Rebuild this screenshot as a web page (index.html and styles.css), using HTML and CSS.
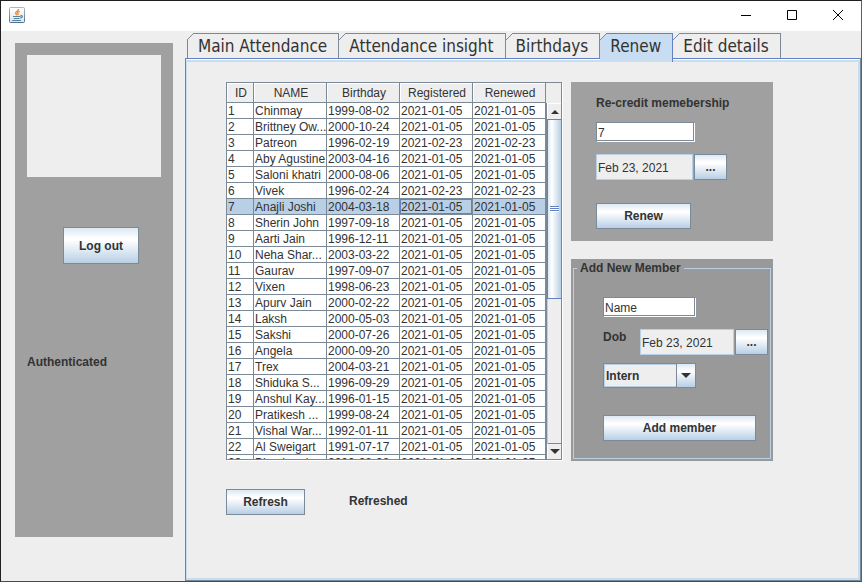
FILE: index.html
```html
<!DOCTYPE html>
<html lang="en">
<head>
<meta charset="utf-8">
<title>Attendance</title>
<link rel="stylesheet" href="styles.css">
</head>
<body>
<div class="window">
  <header class="titlebar">
    <svg class="logo" width="16" height="16" viewBox="0 0 16 16" aria-hidden="true">
      <defs>
        <linearGradient id="frame" x1="0" y1="0" x2="0" y2="1"><stop offset="0" stop-color="#a9b8c6"/><stop offset="1" stop-color="#4f6f8b"/></linearGradient>
        <linearGradient id="face" x1="0" y1="0" x2="0" y2="1"><stop offset="0" stop-color="#fff"/><stop offset="1" stop-color="#dfe4e8"/></linearGradient>
      </defs>
      <rect x=".5" y=".5" width="15" height="15" rx="1" fill="url(#face)" stroke="url(#frame)"/>
      <path d="M9.6 2.2C10 4 6.500 4.300 6.600 6C6.600 7 7.500 7.500 8 8.200M10.700 4.300C8.500 5 8.200 5.800 9 6.700C9.300 7.200 9 7.600 8.600 8" fill="none" stroke="#e8862e" stroke-width="1.300"/>
      <path d="M4 9.500H11.500M4.800 11.500H10.600M3.200 13.500H12M11.400 8.700C14 8.300 14 10.600 11.300 11.100" fill="none" stroke="#5382a1" stroke-width="1.200"/>
    </svg>
    <div class="window-controls">
      <button type="button" aria-label="Minimize"><svg width="10" height="10" viewBox="0 0 10 10"><path d="M0 5.500H10"/></svg></button>
      <button type="button" aria-label="Maximize"><svg width="10" height="10" viewBox="0 0 10 10"><path d="M.5.5H9.500V9.500H.5Z"/></svg></button>
      <button type="button" aria-label="Close"><svg width="10" height="10" viewBox="0 0 10 10"><path d="M0 0L10 10M10 0L0 10"/></svg></button>
    </div>
  </header>
  <div class="content">
    <aside class="sidebar">
      <div class="photo"></div>
      <button type="button" class="btn logout">Log out</button>
      <p class="auth">Authenticated</p>
    </aside>
    <main class="tabs-pane">
      <div class="tabs" role="tablist">
        <button type="button" role="tab" class="tab first">Main Attendance</button>
        <button type="button" role="tab" class="tab">Attendance insight</button>
        <button type="button" role="tab" class="tab">Birthdays</button>
        <button type="button" role="tab" class="tab active" aria-selected="true">Renew</button>
        <button type="button" role="tab" class="tab">Edit details</button>
      </div>
      <div class="panel">
        <section class="members">
          <div class="scroll-pane">
            <div class="table-view">
              <table>
                <colgroup><col class="col-id"><col><col><col><col></colgroup>
                <thead><tr><th>ID</th><th>NAME</th><th>Birthday</th><th>Registered</th><th>Renewed</th></tr></thead>
                <tbody>
                  <tr><td>1</td><td>Chinmay</td><td>1999-08-02</td><td>2021-01-05</td><td>2021-01-05</td></tr>
                  <tr><td>2</td><td>Brittney Ow...</td><td>2000-10-24</td><td>2021-01-05</td><td>2021-01-05</td></tr>
                  <tr><td>3</td><td>Patreon</td><td>1996-02-19</td><td>2021-02-23</td><td>2021-02-23</td></tr>
                  <tr><td>4</td><td>Aby Agustine</td><td>2003-04-16</td><td>2021-01-05</td><td>2021-01-05</td></tr>
                  <tr><td>5</td><td>Saloni khatri</td><td>2000-08-06</td><td>2021-01-05</td><td>2021-01-05</td></tr>
                  <tr><td>6</td><td>Vivek</td><td>1996-02-24</td><td>2021-02-23</td><td>2021-02-23</td></tr>
                  <tr class="selected"><td>7</td><td>Anajli Joshi</td><td>2004-03-18</td><td class="focused">2021-01-05</td><td>2021-01-05</td></tr>
                  <tr><td>8</td><td>Sherin John</td><td>1997-09-18</td><td>2021-01-05</td><td>2021-01-05</td></tr>
                  <tr><td>9</td><td>Aarti Jain</td><td>1996-12-11</td><td>2021-01-05</td><td>2021-01-05</td></tr>
                  <tr><td>10</td><td>Neha Shar...</td><td>2003-03-22</td><td>2021-01-05</td><td>2021-01-05</td></tr>
                  <tr><td>11</td><td>Gaurav</td><td>1997-09-07</td><td>2021-01-05</td><td>2021-01-05</td></tr>
                  <tr><td>12</td><td>Vixen</td><td>1998-06-23</td><td>2021-01-05</td><td>2021-01-05</td></tr>
                  <tr><td>13</td><td>Apurv Jain</td><td>2000-02-22</td><td>2021-01-05</td><td>2021-01-05</td></tr>
                  <tr><td>14</td><td>Laksh</td><td>2000-05-03</td><td>2021-01-05</td><td>2021-01-05</td></tr>
                  <tr><td>15</td><td>Sakshi</td><td>2000-07-26</td><td>2021-01-05</td><td>2021-01-05</td></tr>
                  <tr><td>16</td><td>Angela</td><td>2000-09-20</td><td>2021-01-05</td><td>2021-01-05</td></tr>
                  <tr><td>17</td><td>Trex</td><td>2004-03-21</td><td>2021-01-05</td><td>2021-01-05</td></tr>
                  <tr><td>18</td><td>Shiduka S...</td><td>1996-09-29</td><td>2021-01-05</td><td>2021-01-05</td></tr>
                  <tr><td>19</td><td>Anshul Kay...</td><td>1996-01-15</td><td>2021-01-05</td><td>2021-01-05</td></tr>
                  <tr><td>20</td><td>Pratikesh ...</td><td>1999-08-24</td><td>2021-01-05</td><td>2021-01-05</td></tr>
                  <tr><td>21</td><td>Vishal War...</td><td>1992-01-11</td><td>2021-01-05</td><td>2021-01-05</td></tr>
                  <tr><td>22</td><td>Al Sweigart</td><td>1991-07-17</td><td>2021-01-05</td><td>2021-01-05</td></tr>
                  <tr><td>23</td><td>Bhushan k...</td><td>2000-08-08</td><td>2021-01-05</td><td>2021-01-05</td></tr>
                </tbody>
              </table>
            </div>
            <div class="scroll-side">
              <div class="scroll-corner"></div>
              <div class="scrollbar">
                <button type="button" class="arrow" aria-label="Scroll up"><svg width="8" height="4" viewBox="0 0 8 4"><path d="M0 4L4 0L8 4Z"/></svg></button>
                <div class="track"><div class="thumb"><span class="grip"></span></div></div>
                <button type="button" class="arrow down" aria-label="Scroll down"><svg width="10" height="5" viewBox="0 0 10 5"><path d="M0 0H10L5 5Z"/></svg></button>
              </div>
            </div>
          </div>
          <div class="status-row">
            <button type="button" class="btn refresh">Refresh</button>
            <output class="status">Refreshed</output>
          </div>
        </section>
        <div class="forms">
          <form class="card renew-card">
            <label for="member">Re-credit memebership</label>
            <input id="member" class="field" type="text" value="7">
            <div class="date-row">
              <input class="date" type="text" value="Feb 23, 2021" readonly aria-label="Renewal date">
              <button type="button" class="btn dots" aria-label="Choose renewal date">...</button>
            </div>
            <button type="button" class="btn renew">Renew</button>
          </form>
          <form class="card add-card">
            <fieldset>
              <legend>Add New Member</legend>
              <input class="field" type="text" value="Name" aria-label="Name">
              <div class="date-row">
                <label for="dob">Dob</label>
                <input id="dob" class="date" type="text" value="Feb 23, 2021" readonly>
                <button type="button" class="btn dots" aria-label="Choose date of birth">...</button>
              </div>
              <div class="combo">
                <select aria-label="Role"><option>Intern</option></select>
                <span class="combo-arrow"><svg width="10" height="5" viewBox="0 0 10 5"><path d="M0 0H10L5 5Z"/></svg></span>
              </div>
              <button type="button" class="btn add">Add member</button>
            </fieldset>
          </form>
        </div>
      </div>
    </main>
  </div>
</div>
</body>
</html>
```
FILE: styles.css
```css
:root {
  --line: #7a8a99;
  --blue: #6382bf;
  --soft: #b8cfe5;
  --tab: #c8ddf2;
  --bg: #eee;
  --text: #333;
  --gray: #a0a0a0;
}

* { box-sizing: border-box; }

body {
  margin: 0;
  color: var(--text);
  font: 12px/16px "Liberation Sans", Arial, sans-serif;
}

button, input, select {
  margin: 0;
  padding: 0;
  border: 0;
  border-radius: 0;
  color: inherit;
  font: inherit;
}

.window {
  display: flex;
  flex-direction: column;
  min-height: 100vh;
  border: 1px solid #231f20;
  border-right-color: #56636d;
  border-bottom-color: #454b50;
  background: var(--bg);
}

.titlebar {
  display: flex;
  justify-content: space-between;
  height: 30px;
  padding-left: 8px;
  background: #fff;
}

.logo { margin-top: 6px; }

.window-controls { display: flex; }

.window-controls button {
  display: flex;
  align-items: center;
  justify-content: center;
  width: 46px;
  height: 28px;
  background: none;
}

.window-controls svg {
  overflow: visible;
  fill: none;
  stroke: #000;
}

.content {
  display: flex;
  flex: 1;
  gap: 12px;
  padding-left: 14px;
}

.sidebar {
  flex: 0 0 158px;
  height: 494px;
  margin-top: 12px;
  padding: 12px;
  background: var(--gray);
}

.photo {
  height: 122px;
  background: var(--bg);
}

.btn {
  border: 1px solid var(--line);
  background: linear-gradient(#dde8f3, #fff 30%, #fff 35%, #b8cfe5);
  font-weight: bold;
  text-align: center;
}

.logout {
  display: block;
  width: 76px;
  height: 37px;
  margin: 50px 0 0 36px;
}

.auth {
  margin: 90px 0 0;
  font-weight: bold;
}

.tabs-pane {
  display: flex;
  flex: 1;
  flex-direction: column;
  min-width: 0;
  padding-top: 2px;
}

.tabs {
  display: flex;
  height: 25px;
  padding-left: 2px;
}

.tab {
  position: relative;
  padding: 0 11px 0 10px;
  border: solid var(--line);
  border-width: 1px 1px 0 0;
  background: var(--bg);
  font: 17px/24px "DejaVu Sans Condensed", Tahoma, sans-serif;
  white-space: nowrap;
}

.tab.first { border-left-width: 1px; }

.tab::before {
  position: absolute;
  top: -1px;
  left: 0;
  width: 7px;
  height: 7px;
  background: linear-gradient(135deg, var(--bg) 43%, var(--line) 44%, var(--line) 54%, transparent 55%);
  content: "";
}

.tab.first::before { left: -1px; }

.tab.active {
  z-index: 1;
  height: 29px;
  margin-bottom: -4px;
  padding-bottom: 4px;
  border-color: var(--blue);
  background: var(--tab);
}

.panel {
  display: flex;
  flex: 1;
  align-items: flex-start;
  gap: 9px;
  padding: 23px 20px 20px 40px;
  border: 1px solid var(--blue);
  border-right-color: var(--line);
  border-bottom-color: var(--line);
  box-shadow: inset 0 1px #fff, inset 0 3px var(--tab), inset 1px 0 var(--tab), inset -2px -2px var(--tab);
}

.members { flex: 0 0 336px; }

.scroll-pane {
  display: flex;
  height: 378px;
  border: 1px solid var(--line);
  box-shadow: 1px 1px #fff;
}

.table-view {
  flex: 1;
  overflow: hidden;
  background: #fff;
}

table {
  width: 100%;
  border-spacing: 0;
  table-layout: fixed;
}

.col-id { width: 27px; }

th, td {
  overflow: hidden;
  border: solid var(--line);
  border-width: 0 1px 1px 0;
  font-weight: normal;
  white-space: nowrap;
}

th {
  height: 20px;
  padding: 1px 0 0 2px;
  background: var(--bg);
  box-shadow: inset 1px 1px #fff;
  line-height: 16px;
}

td {
  height: 16px;
  padding: 1px 0 0 1px;
  line-height: 14px;
}

.selected td { background: var(--soft); }

.selected .focused { box-shadow: inset 0 0 0 1px var(--blue); }

.scroll-side {
  display: flex;
  flex: 0 0 15px;
  flex-direction: column;
}

.scroll-corner { height: 20px; }

.scrollbar {
  display: flex;
  flex: 1;
  flex-direction: column;
  border-left: 1px solid var(--line);
}

.arrow {
  display: flex;
  flex: 0 0 16px;
  align-items: center;
  justify-content: center;
  border-top: 1px solid #fff;
  border-left: 1px solid #fff;
  background: var(--bg);
}

.arrow.down { border-top-color: var(--line); }

.arrow svg, .combo-arrow svg { fill: #333; }

.track {
  flex: 1;
  border-left: 1px solid var(--soft);
}

.thumb {
  display: flex;
  align-items: center;
  justify-content: center;
  height: 180px;
  margin-left: -1px;
  border: solid var(--blue);
  border-width: 1px 0 1px 1px;
  background: linear-gradient(90deg, #dde8f3, #fff 30%, #b8cfe5);
}

.grip {
  width: 9px;
  height: 6px;
  background: repeating-linear-gradient(var(--blue) 0 1px, #fff 1px 2px);
}

.status-row {
  display: flex;
  gap: 44px;
  margin-top: 29px;
}

.refresh {
  width: 79px;
  height: 26px;
}

.status {
  padding-top: 4px;
  font-weight: bold;
}

.forms {
  display: flex;
  flex: 0 0 202px;
  flex-direction: column;
  gap: 18px;
}

.card { background: var(--gray); }

.renew-card {
  height: 159px;
  padding: 13px 25px;
}

label {
  display: block;
  font-weight: bold;
}

.field {
  display: block;
  width: 98px;
  height: 19px;
  margin-top: 11px;
  padding: 2px 1px 0;
  border: 1px solid var(--line);
  background: #fff;
  box-shadow: 1px 1px #fff;
}

.date-row {
  display: flex;
  gap: 1px;
  margin-top: 13px;
}

.date {
  width: 97px;
  height: 26px;
  padding: 2px 1px 0;
  border: 1px solid var(--soft);
  background: var(--bg);
}

.dots {
  width: 33px;
  height: 26px;
}

.renew {
  width: 95px;
  height: 26px;
  margin-top: 23px;
}

.add-card {
  height: 202px;
  padding: 1px 2px 2px;
  background: #999;
}

fieldset {
  height: 100%;
  min-width: 0;
  margin: 0;
  padding: 21px 2px 0 29px;
  border: 1px solid var(--soft);
}

legend {
  margin-left: -26px;
  padding: 0 3px;
  font-weight: bold;
}

fieldset .field {
  width: 92px;
  margin-top: 0;
}

fieldset .date-row label { flex: 0 0 36px; }

fieldset .date { width: 94px; }

.combo {
  position: relative;
  width: 93px;
  height: 25px;
  margin-top: 8px;
}

.combo select {
  width: 100%;
  height: 100%;
  padding-left: 2px;
  border: 1px solid var(--line);
  background: var(--bg);
  box-shadow: inset 1px 1px var(--soft), inset -1px -1px var(--soft);
  font-weight: bold;
  appearance: none;
}

.combo-arrow {
  position: absolute;
  top: 0;
  right: 0;
  display: flex;
  align-items: center;
  justify-content: center;
  width: 20px;
  height: 25px;
  border: 1px solid var(--line);
  background: linear-gradient(#dde8f3, #fff 30%, #b8cfe5);
  pointer-events: none;
}

.add {
  width: 153px;
  height: 26px;
  margin-top: 27px;
}
```
